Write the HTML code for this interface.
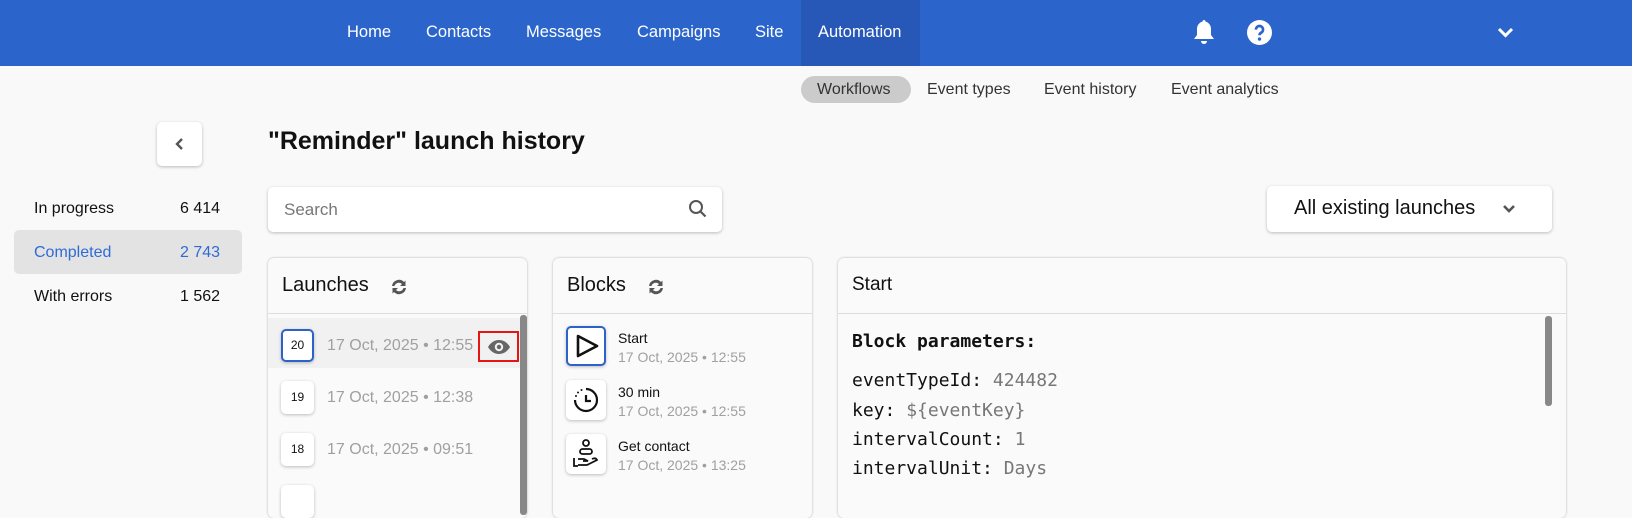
<!DOCTYPE html>
<html><head><meta charset="utf-8"><style>
*{box-sizing:border-box;margin:0;padding:0}
body{width:1632px;height:507px;overflow:hidden;background:#f9f9f9;font-family:"Liberation Sans",Arial,sans-serif;position:relative;color:#111}
.abs{position:absolute}
.nav{left:0;top:0;width:1632px;height:66px;background:#2b65cc}
.act{left:801px;top:0;width:119px;height:66px;background:#2858b7}
.sub{top:81px;font-size:16px;color:#333}
.pill{left:801px;top:76px;width:110px;height:27px;border-radius:14px;background:#cbcbcb}
.card{background:#fff;border-radius:5px;box-shadow:0 1px 3px rgba(0,0,0,.25)}
.panel{background:#fafafa;border-radius:6px;box-shadow:0 0 2px rgba(0,0,0,.3);overflow:hidden}
.ph{height:56px;border-bottom:1px solid #ddd;font-size:20px;padding:16px 0 0 14px}
.badge{width:33px;height:33px;border-radius:5px;background:#fff;box-shadow:0 1px 3px rgba(0,0,0,.25);font-size:12px;text-align:center;line-height:33px}
.dt{font-size:16px;color:#a0a0a0}
.bi{width:40px;height:40px;border-radius:5px;background:#fff;box-shadow:0 1px 3px rgba(0,0,0,.25)}
.bt{font-size:14px}
.bd{font-size:14px;color:#a0a0a0}
.mono{font-family:"DejaVu Sans Mono","Liberation Mono",monospace;font-size:18px;left:14px}
.mono i{font-style:normal;color:#777}
</style></head><body>
<div class="abs nav"></div>
<div class="abs act"></div>
<div class="abs" style="left:0;top:0">
<span class="abs" style="left:347px;top:23px;color:#fff;font-size:16.5px">Home</span>
<span class="abs" style="left:426px;top:23px;color:#fff;font-size:16.5px">Contacts</span>
<span class="abs" style="left:526px;top:23px;color:#fff;font-size:16.5px">Messages</span>
<span class="abs" style="left:637px;top:23px;color:#fff;font-size:16.5px">Campaigns</span>
<span class="abs" style="left:755px;top:23px;color:#fff;font-size:16.5px">Site</span>
<span class="abs" style="left:818px;top:23px;color:#fff;font-size:16.5px">Automation</span>
</div>
<svg class="abs" style="left:1191px;top:18px" width="26" height="28" viewBox="0 0 26 28"><path d="M13 2c1 0 1.5.8 1.5 1.6C18 4.5 20 7.5 20 11v6l3 4H3l3-4v-6c0-3.5 2-6.5 5.5-7.4C11.5 2.8 12 2 13 2z" fill="#fff"/><path d="M10 23a3 3 0 0 0 6 0z" fill="#fff"/></svg>
<svg class="abs" style="left:1247px;top:20px" width="25" height="25" viewBox="0 0 24 24"><circle cx="12" cy="12" r="12" fill="#fff"/><path d="M8.6 9.2a3.4 3.4 0 1 1 5 3c-1.2.7-1.6 1.2-1.6 2.4" stroke="#2b65cc" stroke-width="2.6" fill="none"/><circle cx="12" cy="18.3" r="1.6" fill="#2b65cc"/></svg>
<svg class="abs" style="left:1497px;top:27px" width="17" height="12" viewBox="0 0 17 12"><path d="M2 2l6.5 6.5L15 2" stroke="#fff" stroke-width="3" fill="none"/></svg>

<div class="abs pill"></div>
<span class="abs sub" style="left:817px">Workflows</span>
<span class="abs sub" style="left:927px">Event types</span>
<span class="abs sub" style="left:1044px">Event history</span>
<span class="abs sub" style="left:1171px">Event analytics</span>

<div class="abs card" style="left:157px;top:122px;width:45px;height:44px"></div>
<svg class="abs" style="left:174px;top:137px" width="12" height="14" viewBox="0 0 12 14"><path d="M8 2L3 7l5 5" stroke="#555" stroke-width="2.4" fill="none"/></svg>
<div class="abs" style="left:268px;top:127px;font-size:25px;font-weight:bold">"Reminder" launch history</div>

<div class="abs" style="left:14px;top:230px;width:228px;height:44px;background:#e3e3e3;border-radius:5px"></div>
<span class="abs" style="left:34px;top:200px;font-size:16px">In progress</span><span class="abs" style="left:180px;top:200px;font-size:16px">6 414</span>
<span class="abs" style="left:34px;top:244px;font-size:16px;color:#2f6bd6">Completed</span><span class="abs" style="left:180px;top:244px;font-size:16px;color:#2f6bd6">2 743</span>
<span class="abs" style="left:34px;top:288px;font-size:16px">With errors</span><span class="abs" style="left:180px;top:288px;font-size:16px">1 562</span>

<div class="abs card" style="left:268px;top:187px;width:454px;height:45px"></div>
<span class="abs" style="left:284px;top:200px;font-size:17px;color:#777">Search</span>
<svg class="abs" style="left:688px;top:199px" width="20" height="20" viewBox="0 0 20 20"><circle cx="8" cy="8" r="6" stroke="#555" stroke-width="2" fill="none"/><path d="M12.5 12.5l5 5" stroke="#555" stroke-width="2.2"/></svg>

<div class="abs card" style="left:1267px;top:186px;width:285px;height:46px"></div>
<span class="abs" style="left:1294px;top:197px;font-size:20px;font-weight:500">All existing launches</span>
<svg class="abs" style="left:1502px;top:204px" width="14" height="10" viewBox="0 0 14 10"><path d="M2 2l5 5 5-5" stroke="#555" stroke-width="2.6" fill="none"/></svg>

<div class="abs panel" style="left:268px;top:258px;width:259px;height:260px">
<div class="ph">Launches</div>
<div class="abs" style="left:0;top:60px;width:252px;height:50px;background:#f1f1f1"></div>
<div class="abs" style="left:252px;top:57px;width:7px;height:200px;background:#888;border-radius:3px"></div>
<div class="abs badge" style="left:13px;top:71px;border:2px solid #2f62c8;line-height:29px">20</div>
<span class="abs dt" style="left:59px;top:79px">17 Oct, 2025 • 12:55</span>
<div class="abs" style="left:210px;top:73px;width:41px;height:31px;border:2px solid #e61414"></div>
<svg class="abs" style="left:219px;top:81px" width="24" height="16" viewBox="0 0 24 16"><path d="M1 8C4 3 8 1 12 1s8 2 11 7c-3 5-7 7-11 7S4 13 1 8z" fill="#666"/><circle cx="12" cy="8" r="4.2" fill="#f1f1f1"/><circle cx="12" cy="8" r="2.2" fill="#666"/></svg>
<div class="abs badge" style="left:13px;top:123px">19</div>
<span class="abs dt" style="left:59px;top:131px">17 Oct, 2025 • 12:38</span>
<div class="abs badge" style="left:13px;top:175px">18</div>
<span class="abs dt" style="left:59px;top:183px">17 Oct, 2025 • 09:51</span>
<div class="abs badge" style="left:13px;top:227px"></div>
</div>
<svg class="abs" style="left:389px;top:277px" width="20" height="20" viewBox="0 0 20 20"><path d="M3 9a7 7 0 0 1 12-4l1.5-1.5V9h-5.5l2-2A4.5 4.5 0 0 0 5.5 9zM17 11a7 7 0 0 1-12 4l-1.5 1.5V11h5.5l-2 2a4.5 4.5 0 0 0 7.5-2z" fill="#555"/></svg>

<div class="abs panel" style="left:553px;top:258px;width:259px;height:260px">
<div class="ph">Blocks</div>
<div class="abs bi" style="left:13px;top:68px;border:2px solid #2f62c8"></div>
<svg class="abs" style="left:20px;top:74px" width="28" height="28" viewBox="0 0 28 28"><path d="M5 4l19 10-19 10z" stroke="#111" stroke-width="2.6" fill="none" stroke-linejoin="round"/></svg>
<span class="abs bt" style="left:65px;top:72px">Start</span><span class="abs bd" style="left:65px;top:91px">17 Oct, 2025 • 12:55</span>
<div class="abs bi" style="left:13px;top:122px"></div>
<svg class="abs" style="left:18px;top:127px" width="30" height="30" viewBox="0 0 30 30"><path d="M15 4a11 11 0 1 1-11 11" stroke="#111" stroke-width="2.2" fill="none"/><path d="M15 10v6h5" stroke="#111" stroke-width="2.2" fill="none"/><circle cx="5" cy="11" r="1" fill="#111"/><circle cx="7" cy="7.5" r="1" fill="#111"/><circle cx="10.5" cy="5" r="1" fill="#111"/></svg>
<span class="abs bt" style="left:65px;top:126px">30 min</span><span class="abs bd" style="left:65px;top:145px">17 Oct, 2025 • 12:55</span>
<div class="abs bi" style="left:13px;top:176px"></div>
<svg class="abs" style="left:18px;top:180px" width="30" height="32" viewBox="0 0 30 32"><circle cx="15" cy="5" r="3" stroke="#111" stroke-width="1.8" fill="none"/><rect x="9" y="11" width="12" height="5" rx="2.5" stroke="#111" stroke-width="1.8" fill="none"/><path d="M3 20v8h4M7 21h6l4 2h-5M7 27h9l10-5c-1-2-3-2-5-1" stroke="#111" stroke-width="1.8" fill="none"/></svg>
<span class="abs bt" style="left:65px;top:180px">Get contact</span><span class="abs bd" style="left:65px;top:199px">17 Oct, 2025 • 13:25</span>
</div>
<svg class="abs" style="left:646px;top:277px" width="20" height="20" viewBox="0 0 20 20"><path d="M3 9a7 7 0 0 1 12-4l1.5-1.5V9h-5.5l2-2A4.5 4.5 0 0 0 5.5 9zM17 11a7 7 0 0 1-12 4l-1.5 1.5V11h5.5l-2 2a4.5 4.5 0 0 0 7.5-2z" fill="#555"/></svg>

<div class="abs panel" style="left:838px;top:258px;width:728px;height:260px">
<div class="ph" style="font-size:19px">Start</div>
<div class="abs" style="left:707px;top:58px;width:7px;height:90px;background:#888;border-radius:3px"></div>
<div class="abs mono" style="top:73px;font-weight:bold">Block parameters:</div>
<div class="abs mono" style="top:112px">eventTypeId: <i>424482</i></div>
<div class="abs mono" style="top:142px">key: <i>${eventKey}</i></div>
<div class="abs mono" style="top:171px">intervalCount: <i>1</i></div>
<div class="abs mono" style="top:200px">intervalUnit: <i>Days</i></div>
</div>
</body></html>
